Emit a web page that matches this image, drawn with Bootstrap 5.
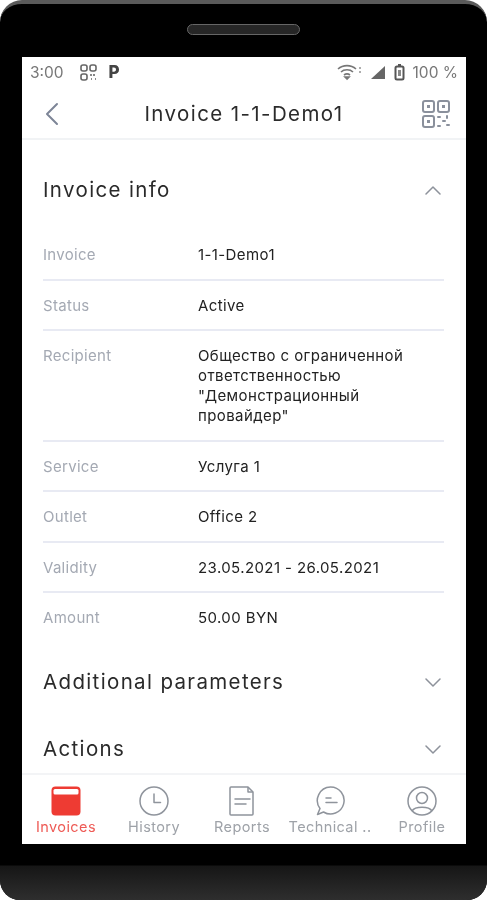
<!DOCTYPE html>
<html lang="en">
<head>
  <meta charset="UTF-8" />
  <meta name="viewport" content="width=device-width, initial-scale=1.0"/>
  <title>Invoice 1-1-Demo1</title>
  <link href="https://cdn.jsdelivr.net/npm/bootstrap@5.3.3/dist/css/bootstrap.min.css" rel="stylesheet" />
  <style>
    body { background: #fff; font-family: Inter, "Liberation Sans", sans-serif; overflow: hidden; }
    .phone { width: 487px; height: 900px; background: #000; border-radius: 22px 22px 20px 20px; border-top: 4px solid #5a5a5a; }
    .phone-top { height: 53px; }
    .speaker { width: 113px; height: 11px; margin-top: 20px; border-radius: 6px; background: #262626; border: 1px solid #666; }
    .screen { width: 444px; height: 787px; margin-left: 22px; background: #fff; filter: blur(.35px); }
    .phone-chin { height: 56px; background: linear-gradient(#000 0, #000 21px, #161616 22px, #2e2e2e 100%); border-radius: 0 0 20px 20px; }
    .status-row { height: 31px; padding: 0 8px; color: #777; font-size: 15.5px; }
    .status-row .pk { font-weight: 800; color: #444; font-size: 17px; margin-left: 12px; }
    .top-row { height: 53px; padding: 3px 16px 0 23px; border-bottom: 2px solid #f1f3f5; }
    .top-title { font-size: 20.5px; color: #2b2b2b; letter-spacing: 1.4px; white-space: nowrap; margin-left: 7px; }
    .content-box { padding: 0 22px 0 21px; overflow: hidden; min-height: 0; }
    .sec-title { font-size: 20.5px; color: #2a2a2a; letter-spacing: 1.35px; }
    .sec-head { height: 67px; }
    .sec-head svg { margin-right: 2px; }
    .sec-head.first { height: 90.5px; padding-top: 10.5px; }
    .info-row { display: flex; padding: 15px 0 13.5px; border-bottom: 2px solid #e8eaf3; font-size: 15px; line-height: 20px; }
    .info-row.row-end { border-bottom: 0; margin-bottom: 7.5px; }
    .info-label { width: 155px; flex: none; color: #a4a9b3; letter-spacing: .3px; }
    .info-value { color: #222; letter-spacing: .4px; }
    .tab-bar { height: 72px; border-top: 2px solid #f3f4f6; padding-top: 11px; }
    .tab-item { flex: 1 1 0; min-width: 0; color: #9ea2a8; font-size: 14.5px; letter-spacing: .4px; line-height: 18px; white-space: nowrap; }
    .tab-item svg { display: block; margin: 0 auto 2px; }
    .tab-item.on { color: #ee5a55; }
    .tab-item.tab-tech { padding-right: 4px; }
  </style>
</head>
<body>
<div class="phone">
  <div class="phone-top d-flex justify-content-center"><div class="speaker"></div></div>
  <div class="screen d-flex flex-column">
    <div class="status-row d-flex align-items-center">
      <span>3:00</span>
      <svg class="ms-3" width="17" height="17" viewBox="0 0 17 17" fill="none" stroke="#666" stroke-width="1.6"><rect x="1" y="1" width="6" height="6" rx="2"/><rect x="10" y="1" width="6" height="6" rx="2"/><rect x="1" y="10" width="6" height="6" rx="2"/><path d="M10 11h2M14 10v2M11 15h1M15 15h1" /></svg>
      <span class="pk">P</span>
      <svg class="ms-auto" width="26" height="17" viewBox="0 0 26 17" fill="none" stroke="#777" stroke-width="1.6"><path d="M1 5c5-4.500 13-4.500 18 0M4 8c3-3 9-3 12 0M7 11c2-1.500 4-1.500 6 0"/><path d="M10 15l-2-2h4z" fill="#777"/><path d="M23 3v2M23 7v2" stroke-width="1.200"/></svg>
      <svg class="ms-2" width="15" height="15" viewBox="0 0 15 15" fill="#666"><path d="M0 14l14-13v13z"/></svg>
      <svg class="ms-2" width="11" height="17" viewBox="0 0 11 17" fill="#fff" stroke="#555" stroke-width="2"><rect x="1.500" y="2.500" width="8" height="13" rx="1.500"/><path d="M4 1h3" /><path d="M5.500 6v6" stroke="#888" stroke-width="3"/></svg>
      <span class="ms-2">100 %</span>
    </div>
    <div class="top-row d-flex align-items-center justify-content-between">
      <svg width="14" height="24" viewBox="0 0 14 24" fill="none" stroke="#7d8597" stroke-width="2" stroke-linecap="round" stroke-linejoin="round"><path d="M12 2L2 12l10 10"/></svg>
      <span class="top-title">Invoice 1-1-Demo1</span>
      <svg width="28" height="28" viewBox="0 0 28 28" fill="none" stroke="#8a909c" stroke-width="2"><rect x="1" y="1" width="11" height="11" rx="2"/><rect x="16" y="1" width="11" height="11" rx="2"/><rect x="1" y="16" width="11" height="11" rx="2"/><rect x="5" y="5" width="3" height="3" fill="#8a909c" stroke="none"/><rect x="20" y="5" width="3" height="3" fill="#8a909c" stroke="none"/><rect x="5" y="20" width="3" height="3" fill="#8a909c" stroke="none"/><path d="M16 17h2M25 16v2M21 21h2M16 26h2M25 25h2" stroke-linecap="round"/></svg>
    </div>
    <div class="content-box flex-grow-1">
      <div class="sec-head first d-flex align-items-center justify-content-between">
        <span class="sec-title">Invoice info</span>
        <svg width="18" height="10" viewBox="0 0 18 10" fill="none" stroke="#8d929b" stroke-width="1.500" stroke-linecap="round" stroke-linejoin="round"><path d="M2 9l7-7 7 7"/></svg>
      </div>
      <div class="info-row"><div class="info-label">Invoice</div><div class="info-value">1-1-Demo1</div></div>
      <div class="info-row"><div class="info-label">Status</div><div class="info-value">Active</div></div>
      <div class="info-row"><div class="info-label">Recipient</div><div class="info-value">Общество с ограниченной<br>ответственностью<br>"Демонстрационный<br>провайдер"</div></div>
      <div class="info-row"><div class="info-label">Service</div><div class="info-value">Услуга 1</div></div>
      <div class="info-row"><div class="info-label">Outlet</div><div class="info-value">Office 2</div></div>
      <div class="info-row"><div class="info-label">Validity</div><div class="info-value">23.05.2021 - 26.05.2021</div></div>
      <div class="info-row row-end"><div class="info-label">Amount</div><div class="info-value">50.00 BYN</div></div>
      <div class="sec-head d-flex align-items-center justify-content-between">
        <span class="sec-title">Additional parameters</span>
        <svg width="18" height="10" viewBox="0 0 18 10" fill="none" stroke="#8d929b" stroke-width="1.500" stroke-linecap="round" stroke-linejoin="round"><path d="M2 1l7 7 7-7"/></svg>
      </div>
      <div class="sec-head d-flex align-items-center justify-content-between">
        <span class="sec-title">Actions</span>
        <svg width="18" height="10" viewBox="0 0 18 10" fill="none" stroke="#8d929b" stroke-width="1.500" stroke-linecap="round" stroke-linejoin="round"><path d="M2 1l7 7 7-7"/></svg>
      </div>
    </div>
    <div class="tab-bar d-flex text-center">
      <div class="tab-item on">
        <svg width="30" height="30" viewBox="0 0 30 30"><rect x="0.500" y="0.500" width="29" height="29" rx="4" fill="#ee3b33"/><rect x="2.500" y="3" width="25" height="5.500" rx="1.500" fill="#fff"/></svg>
        Invoices
      </div>
      <div class="tab-item">
        <svg width="30" height="30" viewBox="0 0 30 30" fill="none" stroke="#8f949c" stroke-width="1.500"><circle cx="15" cy="15" r="14"/><path d="M15 8v8.500h6.500" stroke-linecap="round" stroke-linejoin="round"/></svg>
        History
      </div>
      <div class="tab-item">
        <svg width="30" height="30" viewBox="0 0 30 30" fill="none" stroke="#8f949c" stroke-width="1.500" stroke-linejoin="round"><path d="M4 1h17l5 5v22a1 1 0 0 1-1 1H4a1 1 0 0 1-1-1V2a1 1 0 0 1 1-1z"/><path d="M21 1v5h5"/><path d="M8 13h15M8 18h11" stroke-linecap="round"/></svg>
        Reports
      </div>
      <div class="tab-item tab-tech">
        <svg width="30" height="30" viewBox="0 0 30 30" fill="none" stroke="#8f949c" stroke-width="1.500" stroke-linejoin="round"><path d="M15.500 1a13.500 13.500 0 1 1-7 25l-6 2.500 2.500-6A13.500 13.500 0 0 1 15.500 1z"/><path d="M11 12h5M11 16.500h11" stroke-linecap="round"/></svg>
        Technical ..
      </div>
      <div class="tab-item">
        <svg width="30" height="30" viewBox="0 0 30 30" fill="none" stroke="#8f949c" stroke-width="1.500"><circle cx="15" cy="15" r="14"/><circle cx="15" cy="12" r="5.500"/><path d="M5 25c3-5 17-5 20 0"/></svg>
        Profile
      </div>
    </div>
  </div>
  <div class="phone-chin"></div>
</div>
</body>
</html>
